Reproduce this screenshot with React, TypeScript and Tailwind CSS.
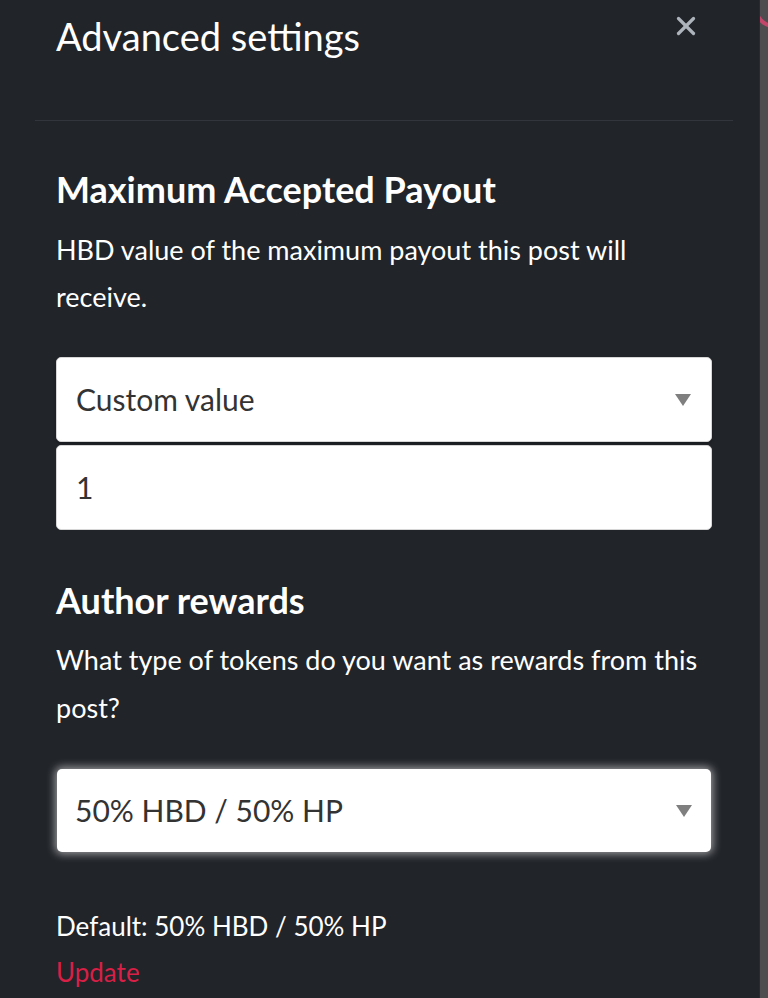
import { X } from "lucide-react";

const font = { fontFamily: "Lato, 'Noto Sans', sans-serif" };

function Caret() {
  return (
    <svg width="16" height="12" viewBox="0 0 16 12" className="shrink-0">
      <path d="M0 0 L16 0 L8 12 Z" fill="#7f7f7f" />
    </svg>
  );
}

export default function App() {
  return (
    <div className="flex min-h-[998px] w-full bg-[#4d4d4f]" style={font}>
      <div className="w-[759px] shrink-0 bg-[#212429]">
        {/* header */}
        <div className="relative h-[120px] px-14 pt-[12px]">
          <h1 className="text-[38px] font-normal leading-[48px] text-white">Advanced settings</h1>
          <button className="absolute right-[58px] top-[11px] text-[#aeb4bb]">
            <X className="h-[30px] w-[30px]" strokeWidth={2.6} />
          </button>
        </div>
        <div className="ml-[35px] mr-[26px] h-px bg-[#32353b]" />

        <div className="pl-14 pr-[44px] pt-[46px]">
          <h2 className="text-[36px] font-bold leading-[44px] text-white">Maximum Accepted Payout</h2>
          <p className="mt-[15px] text-[27px] leading-[47px] text-white">
            HBD value of the maximum payout this post will receive.
          </p>

          <div className="mt-[37px] mr-[3px] flex flex-col gap-[3px]">
            <div className="flex h-[85px] items-center justify-between rounded-[5px] border border-[#d6d6d6] bg-white pl-[19px] pr-[20px] shadow-[0_2px_3px_rgba(0,0,0,0.25)]">
              <span className="text-[30px] text-[#333]">Custom value</span>
              <Caret />
            </div>
            <div className="flex h-[85px] items-center rounded-[5px] border border-[#d6d6d6] bg-white px-[19px]">
              <span className="text-[30px] text-[#333]">1</span>
            </div>
          </div>

          <h2 className="mt-[48px] text-[36px] font-bold leading-[44px] text-white">Author rewards</h2>
          <p className="mt-[14px] text-[27px] leading-[48px] text-white">
            What type of tokens do you want as rewards from this post?
          </p>

          <div className="mt-[37px] mr-[4px] ml-px flex h-[83px] items-center justify-between rounded-[5px] bg-white pl-[18px] pr-[19px] shadow-[0_0_8px_2px_rgba(255,255,255,0.55)]">
            <span className="text-[30px] text-[#333]">50% HBD / 50% HP</span>
            <Caret />
          </div>

          <p className="mt-[51px] text-[26px] leading-[46px] text-white">Default: 50% HBD / 50% HP</p>
          <a className="block text-[26px] leading-[46px] text-[#d81f45]">Update</a>
        </div>
      </div>
      <div className="relative flex-1 overflow-hidden border-l border-[#2a2a2c]">
        <div className="absolute left-[-6px] top-[-28px] h-[56px] w-[40px] rounded-full border-[4px] border-[#c2456a]" />
      </div>
    </div>
  );
}
